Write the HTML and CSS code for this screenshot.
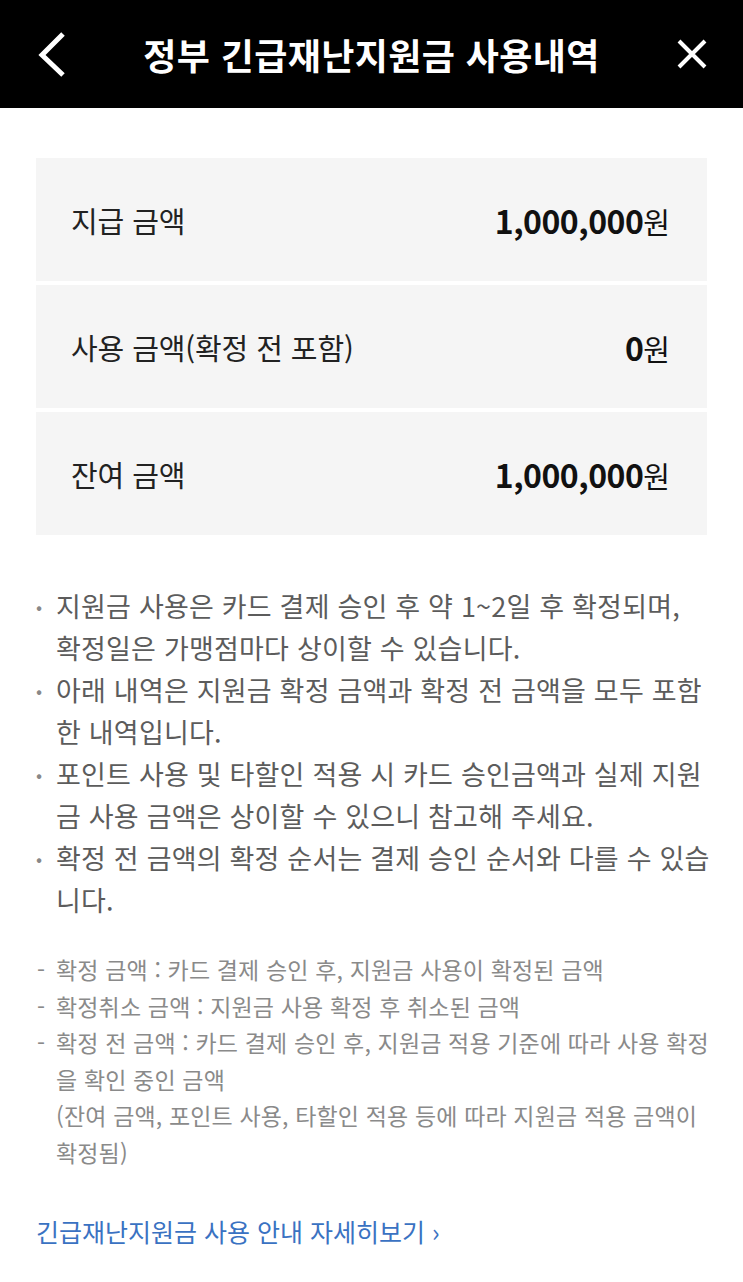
FILE: index.html
```html
<!DOCTYPE html>
<html lang="ko">
<head>
<meta charset="utf-8">
<title>정부 긴급재난지원금 사용내역</title>
<link rel="stylesheet" href="styles.css">
</head>
<body>
<header class="topbar">
  <button class="icon-btn back" aria-label="뒤로">
    <svg width="30" height="46" viewBox="0 0 30 46"><polyline points="27,3 6,24 27,44" fill="none" stroke="#fff" stroke-width="5"/></svg>
  </button>
  <h1 class="title">정부 긴급재난지원금 사용내역</h1>
  <button class="icon-btn close" aria-label="닫기">
    <svg width="32" height="32" viewBox="0 0 32 32"><path d="M4 3 L30 29 M30 3 L4 29" fill="none" stroke="#fff" stroke-width="4"/></svg>
  </button>
</header>

<main class="content">
  <section class="summary">
    <div class="row"><span class="label">지급 금액</span><span class="value"><b>1,000,000</b>원</span></div>
    <div class="row"><span class="label">사용 금액(확정 전 포함)</span><span class="value"><b>0</b>원</span></div>
    <div class="row"><span class="label">잔여 금액</span><span class="value"><b>1,000,000</b>원</span></div>
  </section>

  <ul class="bullets">
    <li>지원금 사용은 카드 결제 승인 후 약 1~2일 후 확정되며,<br>확정일은 가맹점마다 상이할 수 있습니다.</li>
    <li>아래 내역은 지원금 확정 금액과 확정 전 금액을 모두 포함한 내역입니다.</li>
    <li>포인트 사용 및 타할인 적용 시 카드 승인금액과 실제 지원금 사용 금액은 상이할 수 있으니 참고해 주세요.</li>
    <li>확정 전 금액의 확정 순서는 결제 승인 순서와 다를 수 있습니다.</li>
  </ul>

  <ul class="notes">
    <li>확정 금액 : 카드 결제 승인 후, 지원금 사용이 확정된 금액</li>
    <li>확정취소 금액 : 지원금 사용 확정 후 취소된 금액</li>
    <li>확정 전 금액 : 카드 결제 승인 후, 지원금 적용 기준에 따라 사용 확정을 확인 중인 금액<br>(잔여 금액, 포인트 사용, 타할인 적용 등에 따라 지원금 적용 금액이 확정됨)</li>
  </ul>

  <a class="more" href="#">긴급재난지원금 사용 안내 자세히보기 ›</a>
</main>
</body>
</html>
```

FILE: styles.css
```css
* { box-sizing: border-box; }
html, body { margin: 0; padding: 0; background: #fff; }
body {
  font-family: "Noto Sans CJK KR", "Noto Sans", sans-serif;
  color: #222;
}
.topbar {
  height: 108px;
  background: #000;
  display: flex;
  align-items: center;
  justify-content: space-between;
  padding: 0 36px;
}
.icon-btn {
  background: none;
  border: 0;
  padding: 0;
  display: flex;
  align-items: center;
  width: 40px;
  height: 60px;
}
.back { justify-content: flex-start; }
.close { justify-content: flex-end; }
.title {
  margin: 0;
  color: #fff;
  font-size: 36px;
  font-weight: 700;
  letter-spacing: 0.4px;
  line-height: 50px;
}
.content {
  padding: 50px 36px 40px;
}
.summary {
  display: flex;
  flex-direction: column;
  gap: 4px;
}
.row {
  height: 123px;
  background: #f5f5f5;
  display: flex;
  align-items: center;
  justify-content: space-between;
  padding: 0 37px 0 35px;
}
.label {
  font-size: 29px;
  color: #222;
  letter-spacing: -0.1px;
}
.value {
  font-size: 29px;
  color: #111;
  display: flex;
  align-items: baseline;
}
.value b {
  font-size: 32px;
  font-weight: 700;
  letter-spacing: -0.5px;
}
.bullets {
  list-style: none;
  margin: 50px -7px 0 0;
  padding: 0 0 0 20px;
  font-size: 27px;
  line-height: 42px;
  color: #5c5c5c;
  letter-spacing: 0.2px;
}
.bullets li { position: relative; }
.bullets li::before {
  content: "•";
  position: absolute;
  left: -20px;
  top: 0;
  font-size: 18px;
  color: #888;
}
.notes {
  list-style: none;
  margin: 30px -7px 0 0;
  padding: 0 0 0 20px;
  font-size: 23px;
  line-height: 36.6px;
  color: #8a8a8a;
  letter-spacing: 0.15px;
}
.notes li { position: relative; }
.notes li::before {
  content: "-";
  position: absolute;
  left: -19px;
  top: 0;
}
.more {
  display: inline-block;
  margin-top: 42px;
  color: #3a72c2;
  font-size: 25px;
  line-height: 36px;
  text-decoration: none;
}
```
